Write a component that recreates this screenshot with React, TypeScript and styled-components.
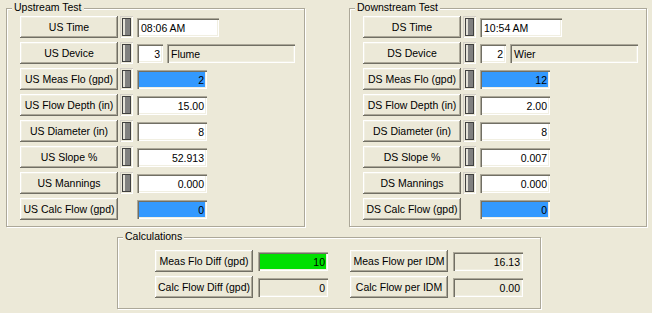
import styled, { createGlobalStyle } from 'styled-components';

const GlobalStyle = createGlobalStyle`
    html, body {
        margin: 0;
        padding: 0;
        background: #ece9d8;
    }
    body {
        font-family: "Liberation Sans", Arial, sans-serif;
        font-size: 10.5px;
        color: #000;
    }
`;

const Window = styled.div`
    width: 652px;
    height: 313px;
    box-sizing: border-box;
    padding: 8px 0 0 6px;
    background: #ece9d8;
    overflow: hidden;
`;

const TopRow = styled.div`
    display: flex;
    gap: 44px;
`;

const GroupBox = styled.div<{ $width: number }>`
    position: relative;
    width: ${(props) => props.$width}px;
    box-sizing: border-box;
    border: 1px solid #aca899;
    box-shadow: inset 1px 1px 0 #fff, 1px 1px 0 #fff;
    padding: 7px 0 6px 13px;
`;

const CalcBox = styled(GroupBox)`
    margin: 10px 0 0 111px;
    padding: 12px 0 10px 37px;
`;

const Caption = styled.span`
    position: absolute;
    top: -8px;
    left: 5px;
    padding: 0 2px;
    line-height: 13px;
    background: #ece9d8;
`;

const Rows = styled.div`
    display: flex;
    flex-direction: column;
    gap: 4px;
`;

const Row = styled.div`
    display: flex;
    align-items: flex-start;
    height: 22px;
`;

const Button = styled.div<{ $width?: number }>`
    width: ${(props) => props.$width ?? 98}px;
    height: 22px;
    box-sizing: border-box;
    display: flex;
    align-items: center;
    justify-content: center;
    white-space: nowrap;
    background: #ece9d8;
    box-shadow: inset -1px -1px 0 #716f64, inset 1px 1px 0 #fff, inset -2px -2px 0 #aca899, inset 2px 2px 0 #f1efe2;
    margin-right: 2px;
`;

const Slider = styled.div<{ $hidden?: boolean }>`
    width: 13px;
    height: 22px;
    box-sizing: border-box;
    margin-right: 4px;
    display: flex;
    align-items: center;
    justify-content: center;
    visibility: ${(props) => (props.$hidden ? 'hidden' : 'visible')};
    box-shadow: inset 1px 1px 0 #d4d0c8, inset -1px -1px 0 #fff;
`;

const Thumb = styled.div`
    width: 9px;
    height: 18px;
    box-sizing: border-box;
    border: 1px solid #404040;
    background: #808080;
    box-shadow: inset 2px 0 0 #e4e2d8;
`;

const tones = {
    white: '#ffffff',
    gray: '#ece9d8',
    blue: '#3399ff',
    green: '#00e000',
};

type Tone = keyof typeof tones;

const Field = styled.div<{ $width: number; $tone: Tone; $left?: boolean }>`
    width: ${(props) => props.$width}px;
    height: 19px;
    margin-top: 2px;
    box-sizing: border-box;
    padding: 0 ${(props) => (props.$left ? '3px 0 4px' : '3px 0 3px')};
    display: flex;
    align-items: center;
    justify-content: ${(props) => (props.$left ? 'flex-start' : 'flex-end')};
    white-space: nowrap;
    background: ${(props) => tones[props.$tone]};
    box-shadow: inset 1px 1px 0 #aca899, inset 2px 2px 0 #716f64, inset -1px -1px 0 #fff, inset -2px -2px 0 #f1efe2;
`;

const DeviceName = styled(Field)`
    margin-left: 4px;
`;

const CalcGrid = styled.div`
    display: grid;
    grid-template-columns: auto auto;
    column-gap: 22px;
    row-gap: 4px;
    justify-content: start;
`;

const CalcItem = styled.div`
    display: flex;
    align-items: flex-start;
    height: 22px;
    gap: 3px;
`;

interface TestRow {
    label: string;
    value: string;
    tone: Tone;
    width?: number;
    left?: boolean;
    slider?: boolean;
    device?: string;
}

function testRows(prefix: string, time: string, deviceNo: string, device: string, vals: string[]): TestRow[] {
    return [
        { label: `${prefix} Time`, value: time, tone: 'white', width: 82, left: true, slider: true },
        { label: `${prefix} Device`, value: deviceNo, tone: 'white', width: 26, slider: true, device },
        { label: `${prefix} Meas Flo (gpd)`, value: vals[0], tone: 'blue', slider: true },
        { label: `${prefix} Flow Depth (in)`, value: vals[1], tone: 'white', slider: true },
        { label: `${prefix} Diameter (in)`, value: vals[2], tone: 'white', slider: true },
        { label: `${prefix} Slope %`, value: vals[3], tone: 'white', slider: true },
        { label: `${prefix} Mannings`, value: vals[4], tone: 'white', slider: true },
        { label: `${prefix} Calc Flow (gpd)`, value: vals[5], tone: 'blue' },
    ];
}

const upstream = testRows('US', '08:06 AM', '3', 'Flume', ['2', '15.00', '8', '52.913', '0.000', '0']);
const downstream = testRows('DS', '10:54 AM', '2', 'Wier', ['12', '2.00', '8', '0.007', '0.000', '0']);

const calcs: { label: string; value: string; tone: Tone }[] = [
    { label: 'Meas Flo Diff (gpd)', value: '10', tone: 'green' },
    { label: 'Meas Flow per IDM', value: '16.13', tone: 'gray' },
    { label: 'Calc Flow Diff (gpd)', value: '0', tone: 'gray' },
    { label: 'Calc Flow per IDM', value: '0.00', tone: 'gray' },
];

function TestGroup({ title, rows, width }: { title: string; rows: TestRow[]; width: number }) {
    return (
        <GroupBox $width={width}>
            <Caption>{title}</Caption>
            <Rows>
                {rows.map((row) => (
                    <Row key={row.label}>
                        <Button>{row.label}</Button>
                        <Slider $hidden={!row.slider}>
                            <Thumb />
                        </Slider>
                        <Field $width={row.width ?? 70} $tone={row.tone} $left={row.left}>
                            {row.value}
                        </Field>
                        {row.device && (
                            <DeviceName $width={128} $tone="gray" $left>
                                {row.device}
                            </DeviceName>
                        )}
                    </Row>
                ))}
            </Rows>
        </GroupBox>
    );
}

function App() {
    return (
        <>
            <GlobalStyle />
            <Window>
                <TopRow>
                    <TestGroup title="Upstream Test" rows={upstream} width={299} />
                    <TestGroup title="Downstream Test" rows={downstream} width={298} />
                </TopRow>
                <CalcBox $width={424}>
                    <Caption>Calculations</Caption>
                    <CalcGrid>
                        {calcs.map((c) => (
                            <CalcItem key={c.label}>
                                <Button>{c.label}</Button>
                                <Field $width={70} $tone={c.tone}>
                                    {c.value}
                                </Field>
                            </CalcItem>
                        ))}
                    </CalcGrid>
                </CalcBox>
            </Window>
        </>
    );
}

export default App;
